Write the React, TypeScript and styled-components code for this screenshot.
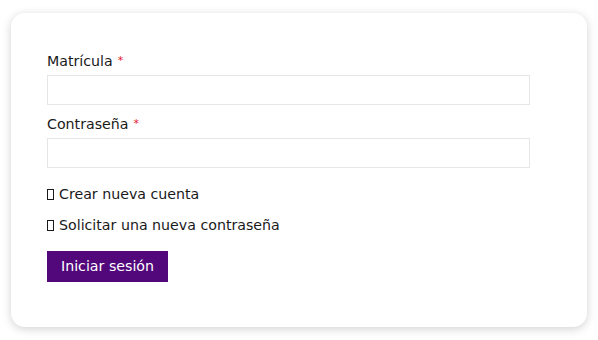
import styled, { createGlobalStyle } from 'styled-components';

const GlobalStyle = createGlobalStyle`
  html, body {
    margin: 0;
    padding: 0;
    background: #ffffff;
  }
  body {
    font-family: "DejaVu Sans", "Liberation Sans", sans-serif;
    color: #1a1a1a;
  }
`;

const Page = styled.div`
  padding: 13px 11px 13px 11px;
`;

const Card = styled.form`
  width: 576px;
  height: 314px;
  box-sizing: border-box;
  background: #ffffff;
  border-radius: 14px;
  box-shadow: 0 2px 10px rgba(0, 0, 0, 0.18);
  padding: 38px 36px 0 36px;
  display: flex;
  flex-direction: column;
`;

const Field = styled.div`
  display: flex;
  flex-direction: column;
  margin-bottom: 9px;
`;

const Label = styled.label`
  font-size: 14.2px;
  line-height: 20px;
  margin-bottom: 4px;
  color: #1a1a1a;
`;

const Required = styled.span`
  color: #e0162b;
  margin-left: 5px;
  font-size: 11px;
  vertical-align: 2px;
`;

const Input = styled.input`
  width: 483px;
  height: 30px;
  box-sizing: border-box;
  border: 1px solid #e6e6e6;
  background: #ffffff;
  outline: none;
  padding: 0 8px;
  font: inherit;
`;

const LinkRow = styled.a`
  display: flex;
  align-items: center;
  gap: 5px;
  font-size: 14.2px;
  line-height: 20px;
  color: #1a1a1a;
  text-decoration: none;
  margin-top: ${({ $top }: { $top: number }) => $top}px;
`;

const Tofu = styled.span`
  display: inline-block;
  width: 5px;
  height: 9px;
  border: 1px solid #1a1a1a;
  margin-top: 1px;
`;

const SubmitButton = styled.button`
  align-self: flex-start;
  margin-top: 16px;
  width: 121px;
  height: 31px;
  border: none;
  background: #52077b;
  color: #ffffff;
  font-family: inherit;
  font-size: 14.2px;
  padding: 0 0 2px 0;
  cursor: pointer;
`;

export default function App() {
  return (
    <>
      <GlobalStyle />
      <Page>
        <Card onSubmit={(e) => e.preventDefault()}>
          <Field>
            <Label>
              Matrícula<Required>*</Required>
            </Label>
            <Input type="text" />
          </Field>
          <Field>
            <Label>
              Contraseña<Required>*</Required>
            </Label>
            <Input type="password" />
          </Field>
          <LinkRow href="#" $top={7}>
            <Tofu />
            Crear nueva cuenta
          </LinkRow>
          <LinkRow href="#" $top={11}>
            <Tofu />
            Solicitar una nueva contraseña
          </LinkRow>
          <SubmitButton type="submit">Iniciar sesión</SubmitButton>
        </Card>
      </Page>
    </>
  );
}
